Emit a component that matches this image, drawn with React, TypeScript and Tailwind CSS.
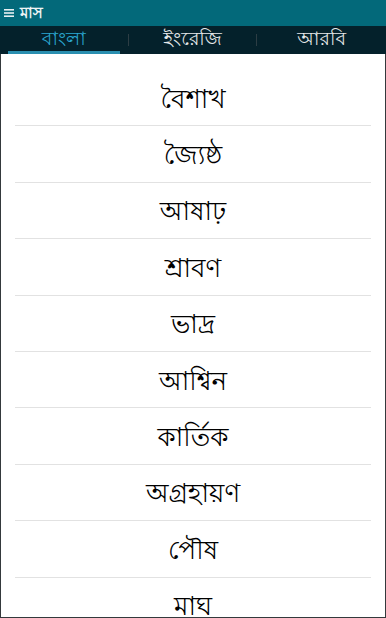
const months = [
  "বৈশাখ",
  "জ্যৈষ্ঠ",
  "আষাঢ়",
  "শ্রাবণ",
  "ভাদ্র",
  "আশ্বিন",
  "কার্তিক",
  "অগ্রহায়ণ",
  "পৌষ",
  "মাঘ",
  "ফাল্গুন",
  "চৈত্র",
];

const tabs = ["বাংলা", "ইংরেজি", "আরবি"];

export default function App() {
  const font = { fontFamily: '"Lohit Bengali", "Noto Sans Bengali", "Noto Sans", sans-serif' };
  return (
    <div className="w-[386px] h-[618px] overflow-hidden flex flex-col bg-[#34393c]" style={font}>
      <div className="h-[26px] bg-[#03697a] flex items-center px-1 gap-1.5 text-white shrink-0">
        <svg width="10" height="10" viewBox="0 0 10 10" className="shrink-0">
          <rect x="0" y="1" width="10" height="1.6" fill="#e8f0f2" />
          <rect x="0" y="4.2" width="10" height="1.6" fill="#e8f0f2" />
          <rect x="0" y="7.4" width="10" height="1.6" fill="#e8f0f2" />
        </svg>
        <span className="text-[15px] font-bold leading-none text-[#eef4f5]">মাস</span>
      </div>
      <div className="h-[28px] bg-[#04212b] flex items-stretch shrink-0">
        {tabs.map((t, i) => (
          <div key={t} className="flex-1 flex items-center">
            <div
              className={
                "flex-1 h-full mx-2 flex items-center justify-center text-[19px] leading-none pt-[2px] " +
                (i === 0 ? "text-[#2aa6d0] border-b-[3px] border-[#2a8fb0]" : "text-[#e6e9ea] border-b-[3px] border-transparent")
              }
            >
              {t}
            </div>
            {i < tabs.length - 1 && <div className="w-px h-[12px] bg-[#2c3d44]" />}
          </div>
        ))}
      </div>
      <div className="flex-1 bg-white mx-px mb-px pt-[16px] overflow-hidden">
        {months.map((m) => (
          <div key={m} className="mx-[14px] h-[56.4px] border-b border-[#e2e2e2] flex items-center justify-center pt-[6px]">
            <span className="text-[26px] text-black leading-none">{m}</span>
          </div>
        ))}
      </div>
    </div>
  );
}
